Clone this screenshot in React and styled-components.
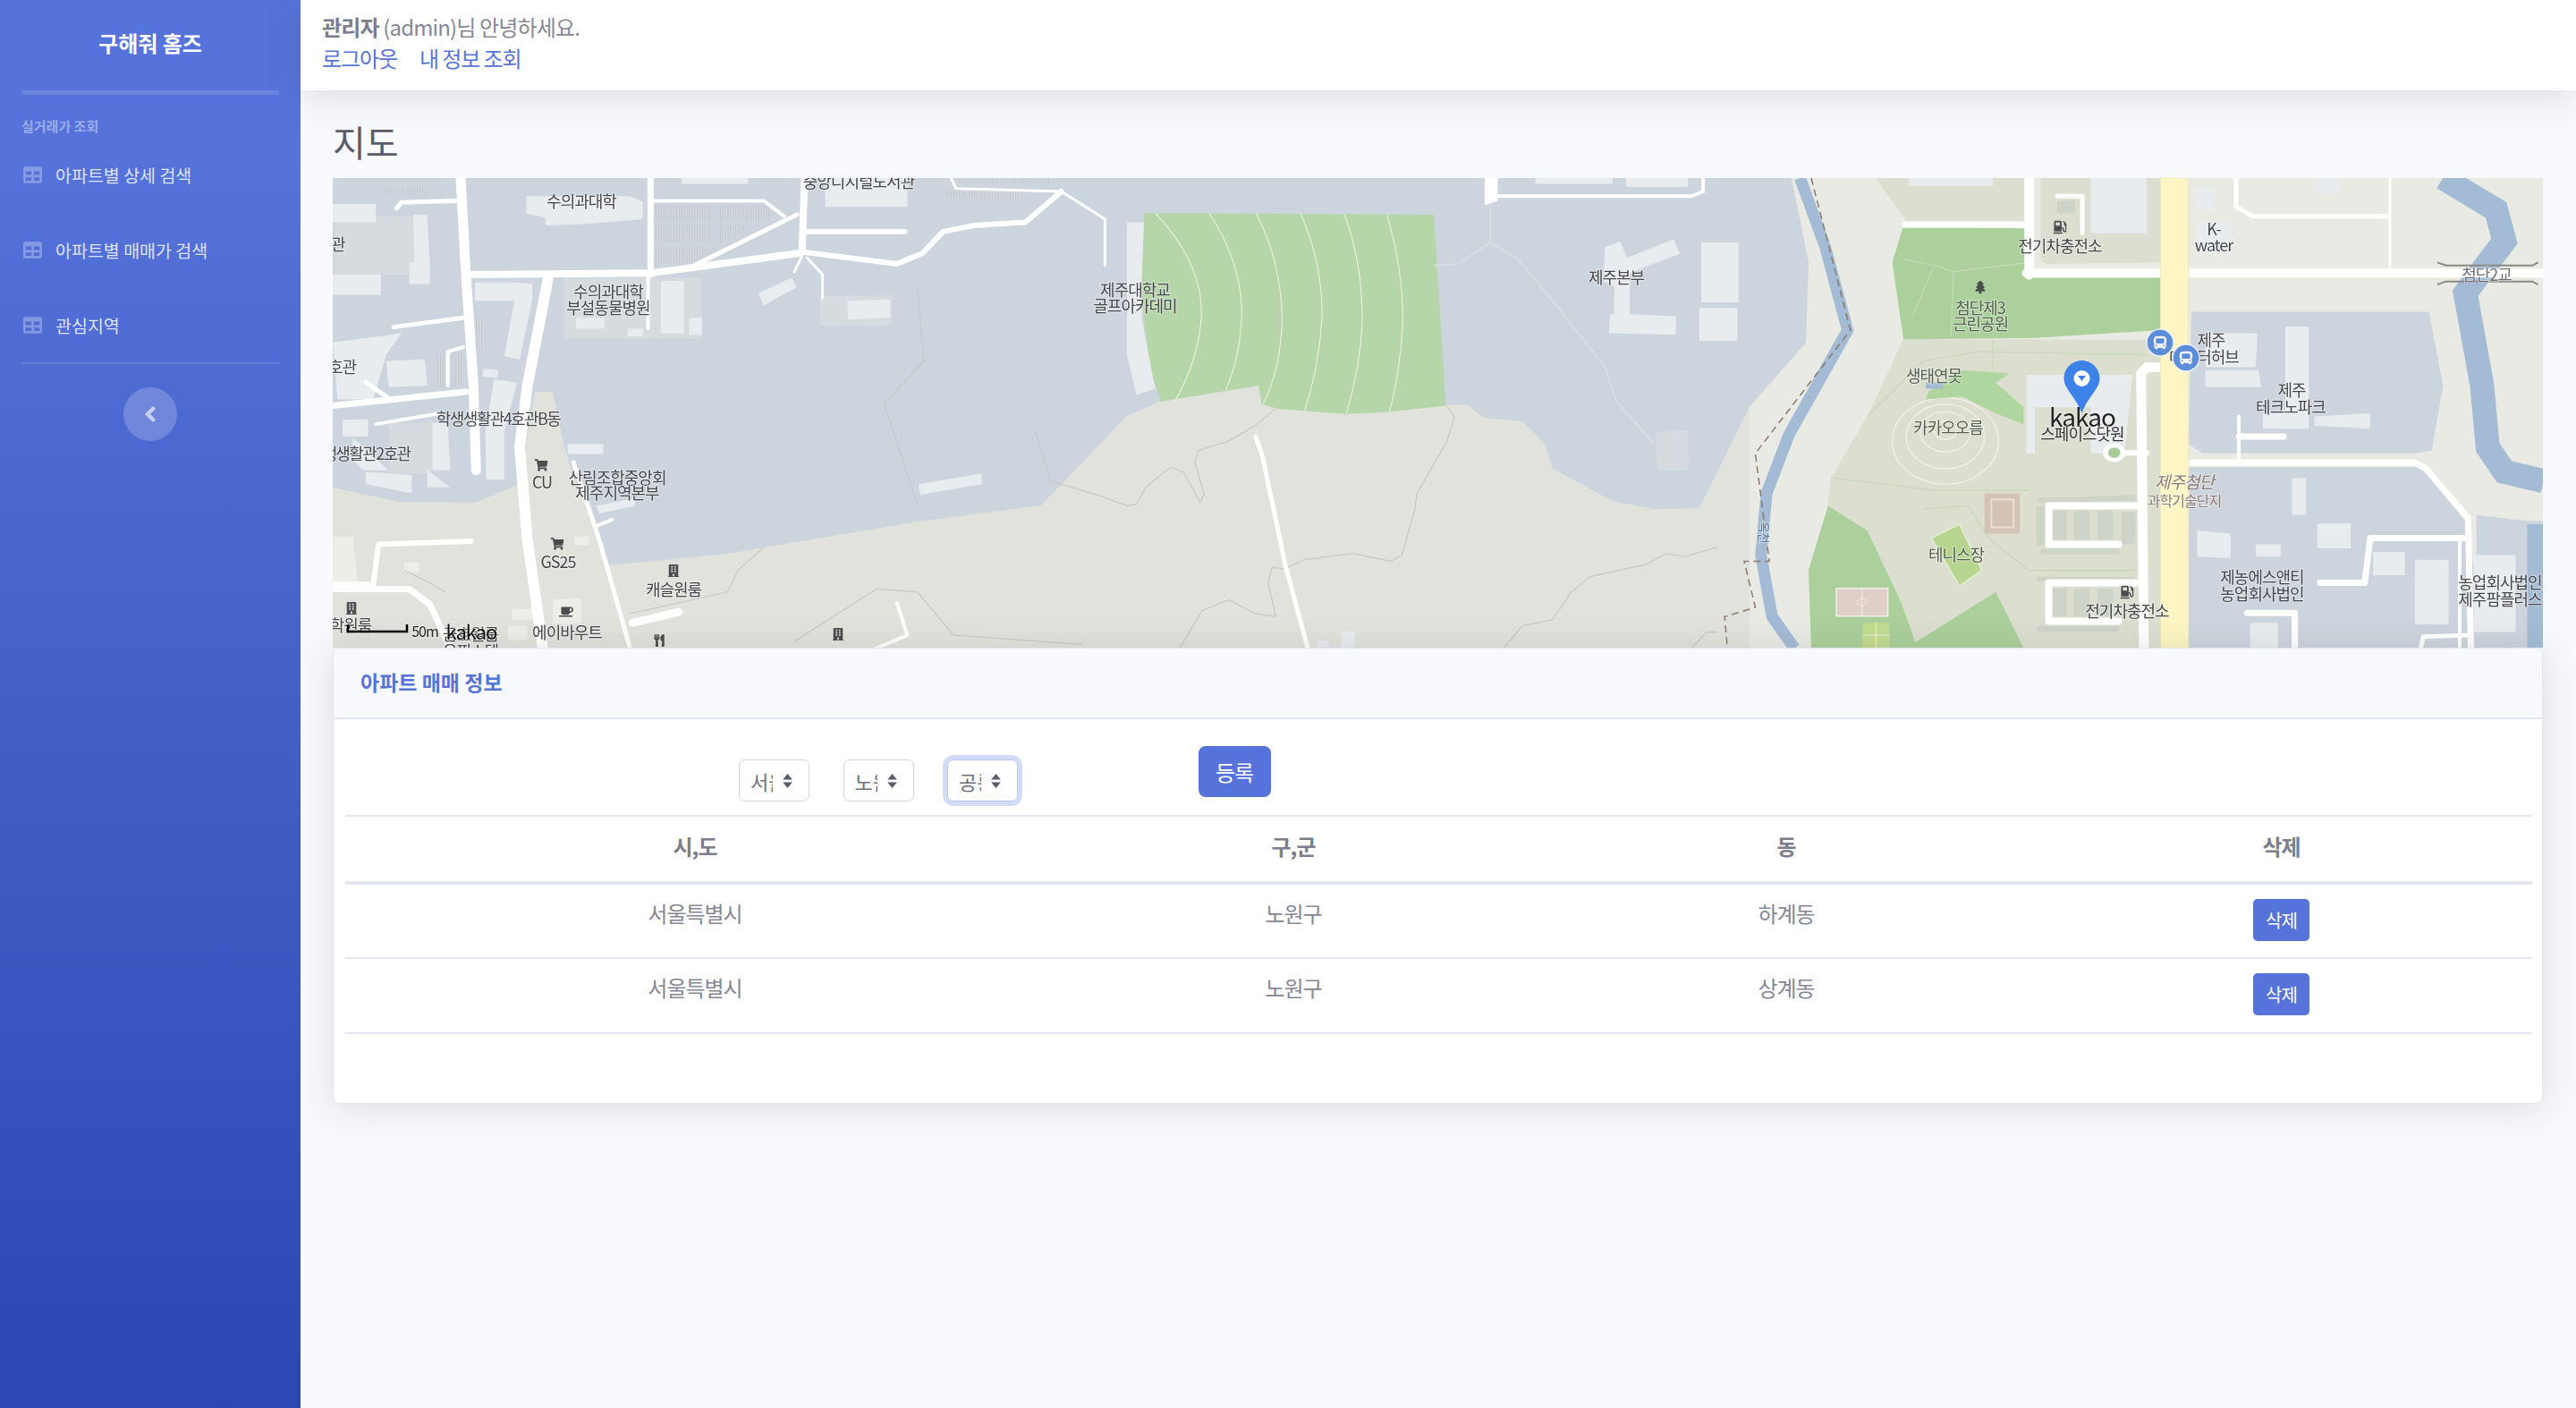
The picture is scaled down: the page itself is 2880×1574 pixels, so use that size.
import React from 'react';
import styled, { createGlobalStyle } from 'styled-components';
import {
  FaTable, FaAngleLeft, FaShoppingCart, FaCoffee, FaGasPump, FaBus, FaTree, FaBuilding, FaUtensils,
} from 'react-icons/fa';

const PRIMARY = '#5673db';
const KR = '"Noto Sans CJK KR", "Noto Sans", sans-serif';

const GlobalStyle = createGlobalStyle`
  html, body {
    margin: 0;
    height: 100%;
    overflow: hidden;
    background: #f8f9fc;
    font-family: ${KR};
  }
  * { box-sizing: border-box; }
`;

const Wrapper = styled.div`
  display: flex;
  width: 2880px;
  height: 1574px;
`;

const Sidebar = styled.aside`
  width: 336px;
  flex: none;
  padding: 0 24px;
  display: flex;
  flex-direction: column;
  background: linear-gradient(180deg, #5673db 10%, #2c47b1 100%);
`;

const Brand = styled.div`
  height: 101px;
  display: flex;
  align-items: center;
  justify-content: center;
  padding-bottom: 7px;
  color: #fff;
  font-size: 24px;
  font-weight: 700;
`;

const SideDivider = styled.hr`
  width: 100%;
  margin: 0;
  border: 0;
  border-top: ${(p) => p.$thick ? 5 : 2}px solid rgba(255, 255, 255, 0.13);
`;

const SideHeading = styled.div`
  margin-top: 23px;
  height: 24px;
  line-height: 24px;
  color: rgba(255, 255, 255, 0.42);
  font-size: 15px;
  font-weight: 700;
`;

const SideNav = styled.nav`
  display: flex;
  flex-direction: column;
`;

const SideLink = styled.a`
  height: 84px;
  display: flex;
  align-items: center;
  gap: 15px;
  padding-left: 2px;
  color: rgba(255, 255, 255, 0.82);
  font-size: 19.5px;

  svg {
    width: 21px;
    height: 21px;
    color: rgba(255, 255, 255, 0.3);
  }
`;

const SideToggle = styled.button`
  width: 60px;
  height: 60px;
  margin: 26px auto 0;
  padding: 0;
  border: 0;
  border-radius: 50%;
  display: flex;
  align-items: center;
  justify-content: center;
  background: rgba(255, 255, 255, 0.2);
  color: rgba(255, 255, 255, 0.6);
  font-size: 28px;
`;

const Main = styled.main`
  flex: 1;
  min-width: 0;
  display: flex;
  flex-direction: column;
`;

const Topbar = styled.header`
  height: 101px;
  flex: none;
  padding: 12px 24px;
  background: #fff;
  box-shadow: 0 6px 40px rgba(58, 59, 69, 0.15);
  color: #858796;
  font-size: 24px;
  line-height: 35px;
  letter-spacing: -0.85px;
`;

const Strong = styled.b`
  color: #7b7d8c;
  font-weight: 700;
`;

const TopLinks = styled.div`
  display: flex;
  gap: 25px;
`;

const TopLink = styled.a`
  color: ${PRIMARY};
  letter-spacing: -1.1px;
`;

const Content = styled.div`
  padding: 0 37px 0 36px;
`;

const PageTitle = styled.h1`
  margin: 0;
  height: 98px;
  padding-top: 28px;
  color: #5a5c69;
  font-size: 40px;
  font-weight: 400;
  line-height: 58px;
`;

const MapFrame = styled.svg`
  display: block;
  width: 2471px;
  height: 525px;
  filter: blur(0.55px);

  polygon, polyline, path, ellipse, rect, line {
    vector-effect: non-scaling-stroke;
  }
`;

const MapLabel = styled.text`
  font-family: ${KR};
  font-size: ${(p) => p.$size || 18}px;
  font-style: ${(p) => p.$italic ? 'italic' : 'normal'};
  fill: ${(p) => p.$color || '#45474a'};
  text-anchor: middle;
  dominant-baseline: central;
  letter-spacing: ${(p) => p.$tight ? -1.6 : -1}px;
  paint-order: stroke;
  stroke: rgba(255, 255, 255, 0.45);
  stroke-width: 2px;
`;

const Card = styled.section`
  height: 510px;
  background: #fff;
  border: 1px solid #e3e6f0;
  border-radius: 8px;
  box-shadow: 0 4px 40px rgba(58, 59, 69, 0.15);
  overflow: hidden;
  position: relative;
`;

const CardHeader = styled.div`
  height: 79px;
  padding: 0 30px 3px;
  display: flex;
  align-items: center;
  background: #f8f9fc;
  border-bottom: 2px solid #e3e6f0;
  color: ${PRIMARY};
  font-size: 23px;
  font-weight: 700;
`;

const CardBody = styled.div`
  padding: 0 10px 0 13px;
`;

const FilterRow = styled.div`
  height: 107px;
  display: flex;
  align-items: flex-start;
  padding: 30px 0 0 440px;
`;

const SelectWrap = styled.div`
  position: relative;
  width: 79px;
  height: 47px;
  margin: 15px 37.5px 0 0;
  border-radius: 7px;
  box-shadow: ${(p) => p.$focused ? '0 0 0 5px #d3dcf7' : 'none'};
`;

const Select = styled.select`
  width: 100%;
  height: 100%;
  padding: 0 40px 0 12px;
  appearance: none;
  background: #fff;
  border: 1.5px solid ${(p) => p.$focused ? '#b5c4f0' : '#d1d3e2'};
  border-radius: 7px;
  outline: none;
  color: #6e707e;
  font-family: ${KR};
  font-size: 22px;
`;

const SelectArrows = styled.svg`
  position: absolute;
  top: 16px;
  right: 18px;
  width: 13px;
  height: 16px;
  pointer-events: none;
`;

const PrimaryButton = styled.button`
  width: ${(p) => p.$small ? 63 : 81}px;
  height: ${(p) => p.$small ? 47 : 57}px;
  margin-left: ${(p) => p.$small ? 0 : 164}px;
  padding: 0;
  border: 0;
  border-radius: ${(p) => p.$small ? 5 : 8}px;
  background: ${PRIMARY};
  color: #fff;
  font-family: ${KR};
  font-size: ${(p) => p.$small ? 20 : 24}px;
  letter-spacing: -1px;
`;

const Table = styled.table`
  width: 2445px;
  table-layout: fixed;
  border-collapse: collapse;
  color: #858796;
  font-size: 24px;
  line-height: 36px;
  letter-spacing: -1px;
  text-align: center;

  col:nth-child(1) { width: 782px; }
  col:nth-child(2) { width: 556px; }
  col:nth-child(3) { width: 546px; }
  col:nth-child(4) { width: 561px; }
`;

const Th = styled.th`
  height: 75px;
  padding-bottom: 7px;
  border-top: 2px solid #e3e6f0;
  border-bottom: 4px solid #e3e6f0;
  color: #7b7d8c;
  font-weight: 700;
`;

const Td = styled.td`
  height: 84px;
  padding: 14px 0 0;
  vertical-align: top;
  border-bottom: 2px solid #e3e6f0;
`;

const DeleteCell = styled(Td)`
  padding-top: 16px;
`;

const RoadGroup = styled.g`
  fill: none;
  stroke: #fff;
  stroke-linejoin: round;
  stroke-linecap: round;
`;

const Z2 = 'translate(360 190) scale(.574 .3444)';
const Z3 = 'translate(1900 190) scale(.625 .3444)';
const Z5 = 'translate(1260 190) scale(.4209 .3444)';

const LAND = '#e1e2dc';
const LAND_LIGHT = '#e9eae4';
const PARK_BASE = '#dcdfd0';
const CAMPUS = '#ccd4dd';
const CAMPUS_SOFT = '#d6dbe0';
const BUILDING = '#e9ecef';
const GREEN = '#abd09b';
const GOLF = '#b5d6a8';
const WATER = '#a3bbd4';
const YELLOW = '#fdf6c4';

const CAMPUS_AREA = '372,199 2003,199 2022,293 2019,383 1956,455 1900,568 1849,569 1803,560 1736,524 1727,496 1702,471 1660,467 1639,452 1618,453 1411,452 1407,431 1298,448 1260,465 1164,565 1026,583 813,619 681,632 658,565 641,534 630,496 618,438 598,438 581,541 532,562 446,561 372,545';

const left = {
  soft: [
    '470,350 740,350 740,548 470,548', '970,410 1110,405 1110,505 970,505',
    '25,150 180,150 180,340 25,340', '130,820 215,820 215,985 130,985',
  ],
  buildings: [
    '398,85 600,85 625,105 625,160 515,175 435,180 435,155 398,140', '21,110 105,110 105,170 21,170',
    '178,145 205,145 210,310 180,310', '21,340 115,340 115,405 21,405', '170,300 210,300 210,370 170,370',
    '298,365 380,365 410,370 410,420 385,615 355,605 375,425 298,425', '660,360 705,360 705,530 660,530',
    '715,480 740,480 740,535 715,535', '595,515 625,515 625,540 595,540', '495,480 550,480 550,515 495,515',
    '850,400 915,350 925,380 860,440', '1023,425 1107,420 1107,480 1025,485', '1162,1020 1285,985 1285,1020 1165,1055',
    '535,1090 610,1065 610,1090 540,1115', '478,890 548,890 548,922 478,922', '125,620 200,615 205,700 130,705',
    '335,680 380,690 355,850 355,1005 320,1005 318,850', '21,560 155,530 125,600 100,745 30,745',
    '40,810 90,810 90,865 40,865', '60,870 130,975 80,975 60,940', '215,820 245,820 250,975 215,975',
    '85,980 175,990 175,1050 85,1020', '205,975 250,1030 205,1030', '980,1 1140,1 1140,120 980,120',
    '700,26 830,26 830,45 700,45', '315,645 345,650 340,675 312,670',
  ],
  parking: [
    '650,115 760,115 760,165 650,165', '775,115 875,115 875,165 775,165', '650,180 760,180 760,235 650,235',
    '775,180 840,180 775,235', '650,255 770,255 720,305 650,305', '1235,30 1420,30 1420,45 1235,45',
    '1215,65 1360,75 1360,98 1215,90', '125,55 205,55 205,80 125,80', '295,470 315,470 315,590 295,590',
    '225,600 240,600 240,705 225,705', '255,590 275,590 275,700 255,700',
  ],
  beige: [
    '160,1275 190,1275 190,1305 160,1305', '370,1425 410,1425 410,1460 370,1460', '362,1480 400,1480 400,1525 362,1525',
    '450,1395 505,1390 505,1470 450,1475', '491,1190 520,1190 520,1218 491,1218', '21,1190 60,1190 70,1340 21,1340',
  ],
  roads: [
    ['270,26 280,330 295,700 300,975', 11], ['285,340 640,335 930,270', 8],
    ['930,265 1120,305 1170,270 1210,200 1270,180 1370,170 1440,70', 6], ['940,26 935,265', 8],
    ['640,26 640,340', 7], ['645,100 860,100 900,150', 4], ['1225,26 1235,60 1440,70 1525,160 1525,310', 3],
    ['725,310 925,145', 5], ['940,200 1135,200', 6], ['935,280 920,330', 3], ['945,285 975,340 975,415', 3],
    ['440,355 400,700 385,900 400,1200 430,1552', 12], ['21,765 280,720', 7], ['140,510 275,480', 5],
    ['105,825 230,790', 4], ['145,125 155,105 260,100', 5], ['85,690 125,735', 5], ['245,700 245,590 275,575', 4],
    ['635,345 635,515', 4], ['490,950 540,1200 600,1552', 5], ['535,1155 565,1135', 4],
    ['290,1205 110,1215 100,1345 21,1345', 6], ['21,1360 170,1360 210,1410 250,1552', 7],
    ['1120,1405 1140,1510 1080,1552', 4], ['605,1470 695,1435', 9],
  ],
  contours: [
    '1390,850 1420,1010 1520,1060 1568,1090', '860,1225 810,1300 790,1370 600,1440',
    '920,1530 1080,1360 1160,1370 1230,1510 1480,1540', '240,1370 210,1340 160,1300', '1160,390 1172,620 1095,760 1160,1090',
  ],
};

const middle = {
  golf: '45,140 815,145 847,765 700,785 580,792 400,775 358,760 350,700 90,752 60,640 38,400',
  lines: [
    'M75 140 Q200 300 198 470 Q190 620 128 748', 'M218 140 Q305 300 305 470 Q300 610 262 715',
    'M343 140 Q410 300 412 480 Q410 640 362 760', 'M460 140 Q520 300 518 480 Q510 640 472 782',
    'M578 145 Q625 300 625 490 Q620 640 583 790', 'M690 145 Q735 320 732 500 Q725 660 697 785',
  ],
  buildings: [
    '0,170 45,170 38,400 40,490 75,710 25,730 0,600',
    '1270,250 1310,232 1328,285 1452,225 1468,272 1335,335 1335,468 1458,475 1458,535 1280,530 1283,468 1293,468 1295,380 1265,360',
    '568,1497 605,1500 605,1552 568,1552', '505,1527 535,1527 535,1548 505,1548', '1085,26 1290,26 1290,45 1085,45',
    '1325,26 1490,26 1490,55 1325,55',
  ],
  paths: [
    '965,110 965,235 880,305 815,310', '965,235 1040,290 1160,470 1270,640 1300,750 1400,890',
  ],
  contours: [
    '395,775 340,830 270,880 190,910 180,950 205,1050 195,1080 150,980 115,965 50,1030 25,1085 0,1090',
    '850,768 870,800 850,880 770,1050 765,1100 730,1250 700,1270 600,1245 470,1265 420,1295 385,1290 375,1340 395,1450 340,1440 270,1395 200,1430 140,1552',
    '1000,1552 1050,1480 1130,1460 1180,1370 1230,1320 1380,1280 1430,1245 1480,1255 1568,1225',
    '1500,1552 1540,1500 1568,1500',
  ],
};

const right = {
  parkBase: ['365,550 825,550 825,1552 200,1552 235,1000 300,800', '315,26 585,26 585,165 370,165', '610,26 825,26 825,300 620,305 610,290'],
  green: [
    '365,180 590,190 590,350 825,350 825,520 600,545 365,550 345,300',
    '230,1090 300,1170 360,1400 390,1552 200,1552 195,1300', '530,1370 580,1552 370,1552',
  ],
  campus: [
    '880,460 1305,460 1330,700 1310,910 1280,920 900,920 875,890',
    '875,965 1290,965 1370,1140 1385,1290 1400,1552 875,1552',
    '1390,1120 1480,1140 1510,1140 1510,1552 1390,1552',
  ],
  buildings: [
    '3,235 70,235 70,430 3,430', '0,447 68,447 68,555 0,555',
    '1048,508 1090,508 1090,840 1008,840 1008,790 1048,790', '905,530 998,530 995,640 905,640', '905,650 1000,650 1005,705 905,705',
    '1100,800 1200,790 1200,840 1100,830', '1060,1000 1085,1000 1085,1120 1060,1120', '1105,1148 1165,1148 1165,1228 1105,1228',
    '890,1170 950,1180 950,1260 890,1255', '995,1215 1040,1215 1040,1255 995,1255', '1205,1240 1262,1240 1262,1315 1205,1315',
    '1280,1265 1340,1265 1340,1475 1280,1475', '985,1470 1035,1470 1035,1552 985,1552', '1385,1250 1460,1250 1460,1500 1385,1500',
    '700,26 800,26 800,205 700,205', '885,60 920,60 920,130 885,130', '890,170 950,170 950,270 890,270',
    '1100,26 1145,26 1145,75 1100,75', '375,26 525,26 525,52 375,52', '585,665 775,665 760,920 700,920 700,770 600,770 600,920 585,920',
  ],
  lots: [
    '632,1105 658,1105 658,1200 632,1200', '670,1105 698,1105 698,1200 670,1200', '712,1105 740,1105 740,1200 712,1200',
    '630,1358 658,1358 658,1450 630,1450', '670,1358 698,1358 698,1450 670,1450', '712,1358 740,1358 740,1450 712,1450',
    '605,1065 780,1055 780,1075 605,1080', '603,1090 618,1090 618,1220 603,1220', '755,1110 780,1110 780,1215 755,1215',
    '610,1230 750,1230 750,1248 610,1248', '605,1320 780,1320 780,1335 605,1335', '603,1480 750,1480 750,1498 603,1498',
    '640,100 672,100 672,140 640,140',
  ],
  roads: [
    ['590,26 590,340', 11], ['585,335 825,335', 10], ['875,335 1510,335', 10], ['368,178 590,178', 7],
    ['640,85 685,85 685,205', 5], ['825,640 800,640 790,660 795,1552', 11], ['875,950 1280,950 1300,970 1375,1130 1380,1552', 7],
    ['960,26 960,120 990,150 1230,150', 5], ['1235,26 1235,315', 3], ['625,1090 780,1090', 8],
    ['625,1090 625,1215 750,1215', 8], ['625,1340 780,1340', 8], ['625,1340 625,1465 750,1465', 8],
    ['965,800 965,940', 4], ['965,865 1045,865', 7], ['1110,1340 1190,1340 1200,1195 1370,1195', 7],
    ['1360,1210 1360,1552', 4], ['980,1438 1065,1438 1065,1552', 7], ['1290,1552 1295,1515 1380,1510', 5],
    ['742,918 800,918', 6],
  ],
  riverThin: '180,26 225,250 265,520 160,860 120,1050 110,1250 130,1450 170,1552',
  riverWide: '1330,26 1425,130 1440,230 1370,400 1400,700 1410,900 1440,980 1510,1010',
  riverCorner: '1495,1150 1495,1552',
  trail: '200,26 270,520 100,920 125,1270 80,1270 100,1420 45,1450 50,1552',
  parkPaths: [
    '365,290 420,310 455,330 590,300', '455,330 450,540', '420,310 380,480', '300,800 400,620 500,590 800,600',
    '240,1000 420,1040 590,1040', '400,1100 480,1090 520,1200 590,1300 790,1300', '525,550 525,660',
  ],
};

const LABELS = [
  { x: 650, y: 224, t: '수의과대학' }, { x: 680, y: 325, t: '수의과대학' }, { x: 680, y: 343, t: '부설동물병원' },
  { x: 557, y: 467, t: '학생생활관4호관B동', tight: true }, { x: 402, y: 506, t: '학생생활관2호관', tight: true },
  { x: 378, y: 409, t: '1호관' }, { x: 370, y: 272, t: '본관' }, { x: 606, y: 538, t: 'CU' },
  { x: 690, y: 533, t: '산림조합중앙회' }, { x: 690, y: 550, t: '제주지역본부' }, { x: 624, y: 627, t: 'GS25' },
  { x: 753, y: 658, t: '캐슬원룸' }, { x: 634, y: 706, t: '에이바우트' }, { x: 526, y: 708, t: '금호원룸' },
  { x: 526, y: 727, t: '유찌스템' }, { x: 392, y: 698, t: '학원룸' }, { x: 960, y: 202, t: '중앙디지털도서관' },
  { x: 1269, y: 323, t: '제주대학교' }, { x: 1269, y: 341, t: '골프아카데미' }, { x: 1807, y: 309, t: '제주본부' },
  { x: 2303, y: 274, t: '전기차충전소' }, { x: 2475, y: 255, t: 'K-' }, { x: 2475, y: 273, t: 'water' },
  { x: 2780, y: 306, t: '첨단2교', color: '#6f7176' }, { x: 2214, y: 343, t: '첨단제3', color: '#55614f' },
  { x: 2214, y: 361, t: '근린공원', color: '#55614f' }, { x: 2472, y: 379, t: '제주' }, { x: 2464, y: 398, t: '데이터허브' },
  { x: 2562, y: 435, t: '제주' }, { x: 2561, y: 454, t: '테크노파크' }, { x: 2162, y: 419, t: '생태연못', color: '#55614f' },
  { x: 2178, y: 477, t: '카카오오름', color: '#55614f' }, { x: 2328, y: 465, t: 'kakao', size: 28, color: '#222' },
  { x: 2328, y: 484, t: '스페이스닷원', color: '#333' }, { x: 2442, y: 537, t: '제주첨단', color: '#8d7b74', italic: true, size: 19 },
  { x: 2442, y: 559, t: '과학기술단지', color: '#8d7b74', size: 16 }, { x: 2187, y: 619, t: '테니스장', color: '#55614f' },
  { x: 2378, y: 682, t: '전기차충전소' }, { x: 2529, y: 644, t: '제농에스앤티' }, { x: 2529, y: 663, t: '농업회사법인' },
  { x: 2795, y: 650, t: '농업회사법인' }, { x: 2795, y: 669, t: '제주팜플러스' },
];

const ICONS = [
  { I: FaShoppingCart, x: 605, y: 520, s: 15 }, { I: FaShoppingCart, x: 623, y: 608, s: 15 },
  { I: FaBuilding, x: 753, y: 638, s: 14 }, { I: FaBuilding, x: 393, y: 680, s: 14 }, { I: FaBuilding, x: 937, y: 709, s: 14 },
  { I: FaCoffee, x: 633, y: 684, s: 16 }, { I: FaUtensils, x: 737, y: 716, s: 14 },
  { I: FaGasPump, x: 2303, y: 254, s: 15 }, { I: FaGasPump, x: 2378, y: 662, s: 15 }, { I: FaTree, x: 2214, y: 321, s: 15 },
];

function Polys({ items, fill }) {
  return items.map((p) => <polygon key={p} points={p} fill={fill} />);
}

function Roads({ items }) {
  return (
    <RoadGroup>
      {items.map(([p, w]) => <polyline key={p} points={p} strokeWidth={w} />)}
    </RoadGroup>
  );
}

function Lines({ items, color, width, dash }) {
  return (
    <g fill="none" stroke={color} strokeWidth={width} strokeDasharray={dash}>
      {items.map((p) => <polyline key={p} points={p} />)}
    </g>
  );
}

function BusMarker({ x, y }) {
  return (
    <g>
      <circle cx={x} cy={y} r={15} fill="#5b8dd9" stroke="#e9eef8" strokeWidth={1.5} />
      <FaBus x={x - 7.5} y={y - 7.5} size={15} color="#fff" />
    </g>
  );
}

function KakaoMap() {
  return (
    <MapFrame viewBox="372 199 2471 525">
      <defs>
        <pattern id="lotStripes" width="5" height="5" patternUnits="userSpaceOnUse">
          <rect width="5" height="5" fill="#d3d8de" />
          <rect width="1.500" height="5" fill="#bcc3cb" />
        </pattern>
      </defs>
      <rect x="372" y="199" width="2471" height="525" fill={LAND} />
      <rect x="1956" y="199" width="887" height="525" fill={LAND_LIGHT} />
      <polygon points={CAMPUS_AREA} fill={CAMPUS} />

      <g transform={Z5}>
        <polygon points={middle.golf} fill={GOLF} />
        <g fill="none" stroke="#e6f0df" strokeWidth="1.2">
          {middle.lines.map((d) => <path key={d} d={d} />)}
        </g>
        <Polys items={middle.buildings} fill={BUILDING} />
        <polygon points="1405,850 1490,845 1492,975 1408,975" fill={CAMPUS_SOFT} />
        <Lines items={middle.paths} color="#d8dde2" width={2} />
        <Lines items={middle.contours} color="#c6c7c1" width={1.2} />
        <polygon points="950,26 985,26 985,100 950,115" fill="#fff" />
        <polyline points="985,85 1500,85 1530,70 1530,26" fill="none" stroke="#fff" strokeWidth="4" />
        <polyline points="340,860 360,930 420,1280 480,1552" fill="none" stroke="#fff" strokeWidth="5" />
      </g>

      <g transform={Z2}>
        <Polys items={left.soft} fill={CAMPUS_SOFT} />
        <Polys items={left.parking} fill="url(#lotStripes)" />
        <Polys items={left.buildings} fill={BUILDING} />
        <Polys items={left.beige} fill="#eeeee8" />
        <Lines items={left.contours} color="#c6c9c6" width={1.2} />
        <Roads items={left.roads} />
      </g>

      <g transform={Z3}>
        <Polys items={right.parkBase} fill={PARK_BASE} />
        <Polys items={right.green} fill={GREEN} />
        <Lines items={right.parkPaths} color="#c8d8b8" width={1.2} />
        <Polys items={right.campus} fill={CAMPUS} />
        <ellipse cx="440" cy="880" rx="95" ry="140" fill="none" stroke="#eef0e4" strokeWidth="1.5" />
        <ellipse cx="440" cy="865" rx="70" ry="105" fill="none" stroke="#eef0e4" strokeWidth="1.5" />
        <ellipse cx="440" cy="850" rx="45" ry="65" fill="none" stroke="#eef0e4" strokeWidth="1.5" />
        <ellipse cx="440" cy="845" rx="20" ry="30" fill="none" stroke="#eef0e4" strokeWidth="1.5" />
        <polygon points="405,745 410,720 470,650 555,660 530,690 580,770 580,825 530,790 470,735" fill="#b0d6a0" />
        <polygon points="405,690 435,690 435,710 405,710" fill={WATER} />
        <Polys items={right.buildings} fill={BUILDING} />
        <Polys items={right.lots} fill="#cfd4c8" />
        <Lines items={[right.riverThin]} color={WATER} width={13} />
        <Lines items={[right.riverWide]} color={WATER} width={27} />
        <Lines items={[right.riverCorner]} color={WATER} width={18} />
        <Lines items={[right.trail]} color="#8c7a6c" width={1.5} dash="8 5" />
        <rect x="510" y="1050" width="63" height="130" fill="#d4c2b4" />
        <rect x="522" y="1070" width="40" height="90" fill="none" stroke="#eadfd6" strokeWidth="2" />
        <polygon points="415,1195 465,1150 505,1300 465,1350" fill="#b8d590" stroke="#e4eed0" strokeWidth="1.5" />
        <rect x="245" y="1358" width="92" height="90" fill="#e0cfc6" stroke="#f0f0ea" strokeWidth="1.5" />
        <line x1="291" y1="1358" x2="291" y2="1448" stroke="#f0f0ea" strokeWidth="1" />
        <ellipse cx="291" cy="1403" rx="8" ry="12" fill="none" stroke="#f0f0ea" strokeWidth="1" />
        <rect x="292" y="1470" width="48" height="82" fill="#c2dc90" />
        <line x1="316" y1="1470" x2="316" y2="1552" stroke="#eef3dc" strokeWidth="1" />
        <line x1="292" y1="1510" x2="340" y2="1510" stroke="#eef3dc" strokeWidth="1" />
        <Roads items={right.roads} />
        <rect x="825" y="26" width="50" height="1526" fill={YELLOW} stroke="#ece6bc" strokeWidth="1" />
        <ellipse cx="742" cy="918" rx="20" ry="30" fill="#fff" />
        <ellipse cx="742" cy="918" rx="11" ry="17" fill="#a5cc98" />
        <g fill="none" stroke="#8a8a85" strokeWidth="2">
          <polyline points="1320,300 1335,310 1490,310 1500,300" />
          <polyline points="1320,372 1335,362 1490,362 1500,372" />
        </g>
      </g>

      {ICONS.map(({ I, x, y, s }) => (
        <I key={`${x}-${y}`} x={x - s / 2} y={y - s / 2} size={s} color="#4a4c4e" />
      ))}
      {LABELS.map((l) => (
        <MapLabel key={`${l.x}-${l.y}`} x={l.x} y={l.y} $size={l.size} $color={l.color} $italic={l.italic} $tight={l.tight}>
          {l.t}
        </MapLabel>
      ))}
      <MapLabel x={1973} y={595} $size={14} $color="#5e7fa8" transform="rotate(90 1973 595)">옥천</MapLabel>

      <BusMarker x={2415} y={383} />
      <BusMarker x={2444} y={400} />
      <path d="M2327.5 403c-11 0-20 9-20 20 0 12 13 20 20 39 7-19 20-27 20-39 0-11-9-20-20-20z" fill="#3d82e8" />
      <circle cx="2327.5" cy="423" r="9" fill="#fff" />
      <path d="M2323 420h9l-4.500 6z" fill="#3d82e8" />

      <path d="M389 698v8h66v-8" fill="none" stroke="#000" strokeWidth="2.500" />
      <MapLabel x={475} y={705} $size={16} $color="#222">50m</MapLabel>
      <MapLabel x={527} y={705} $size={22} $color="#111">kakao</MapLabel>
    </MapFrame>
  );
}

function FilterSelect({ value, focused }) {
  return (
    <SelectWrap $focused={focused}>
      <Select defaultValue={value} $focused={focused}>
        <option>{value}</option>
      </Select>
      <SelectArrows viewBox="0 0 12 15">
        <path d="M6 0l5 6H1zM6 15l-5-6h10z" fill="#5a5c69" />
      </SelectArrows>
    </SelectWrap>
  );
}

const NAV_ITEMS = ['아파트별 상세 검색', '아파트별 매매가 검색', '관심지역'];

const ROWS = [
  { sido: '서울특별시', gugun: '노원구', dong: '하계동' },
  { sido: '서울특별시', gugun: '노원구', dong: '상계동' },
];

export default function App() {
  return (
    <Wrapper>
      <GlobalStyle />
      <Sidebar>
        <Brand>구해줘 홈즈</Brand>
        <SideDivider $thick />
        <SideHeading>실거래가 조회</SideHeading>
        <SideNav>
          {NAV_ITEMS.map((label) => (
            <SideLink key={label}>
              <FaTable />
              {label}
            </SideLink>
          ))}
        </SideNav>
        <SideDivider />
        <SideToggle aria-label="사이드바 접기"><FaAngleLeft /></SideToggle>
      </Sidebar>
      <Main>
        <Topbar>
          <div>
            <Strong>관리자</Strong> (admin)님 안녕하세요.
          </div>
          <TopLinks>
            <TopLink>로그아웃</TopLink>
            <TopLink>내 정보 조회</TopLink>
          </TopLinks>
        </Topbar>
        <Content>
          <PageTitle>지도</PageTitle>
          <KakaoMap />
          <Card>
            <CardHeader>아파트 매매 정보</CardHeader>
            <CardBody>
              <FilterRow>
                <FilterSelect value="서울특별시" />
                <FilterSelect value="노원구" />
                <FilterSelect value="공릉동" focused />
                <PrimaryButton>등록</PrimaryButton>
              </FilterRow>
              <Table>
                <colgroup><col /><col /><col /><col /></colgroup>
                <thead>
                  <tr>
                    <Th>시,도</Th>
                    <Th>구,군</Th>
                    <Th>동</Th>
                    <Th>삭제</Th>
                  </tr>
                </thead>
                <tbody>
                  {ROWS.map((row) => (
                    <tr key={row.dong}>
                      <Td>{row.sido}</Td>
                      <Td>{row.gugun}</Td>
                      <Td>{row.dong}</Td>
                      <DeleteCell><PrimaryButton $small>삭제</PrimaryButton></DeleteCell>
                    </tr>
                  ))}
                </tbody>
              </Table>
            </CardBody>
          </Card>
        </Content>
      </Main>
    </Wrapper>
  );
}
